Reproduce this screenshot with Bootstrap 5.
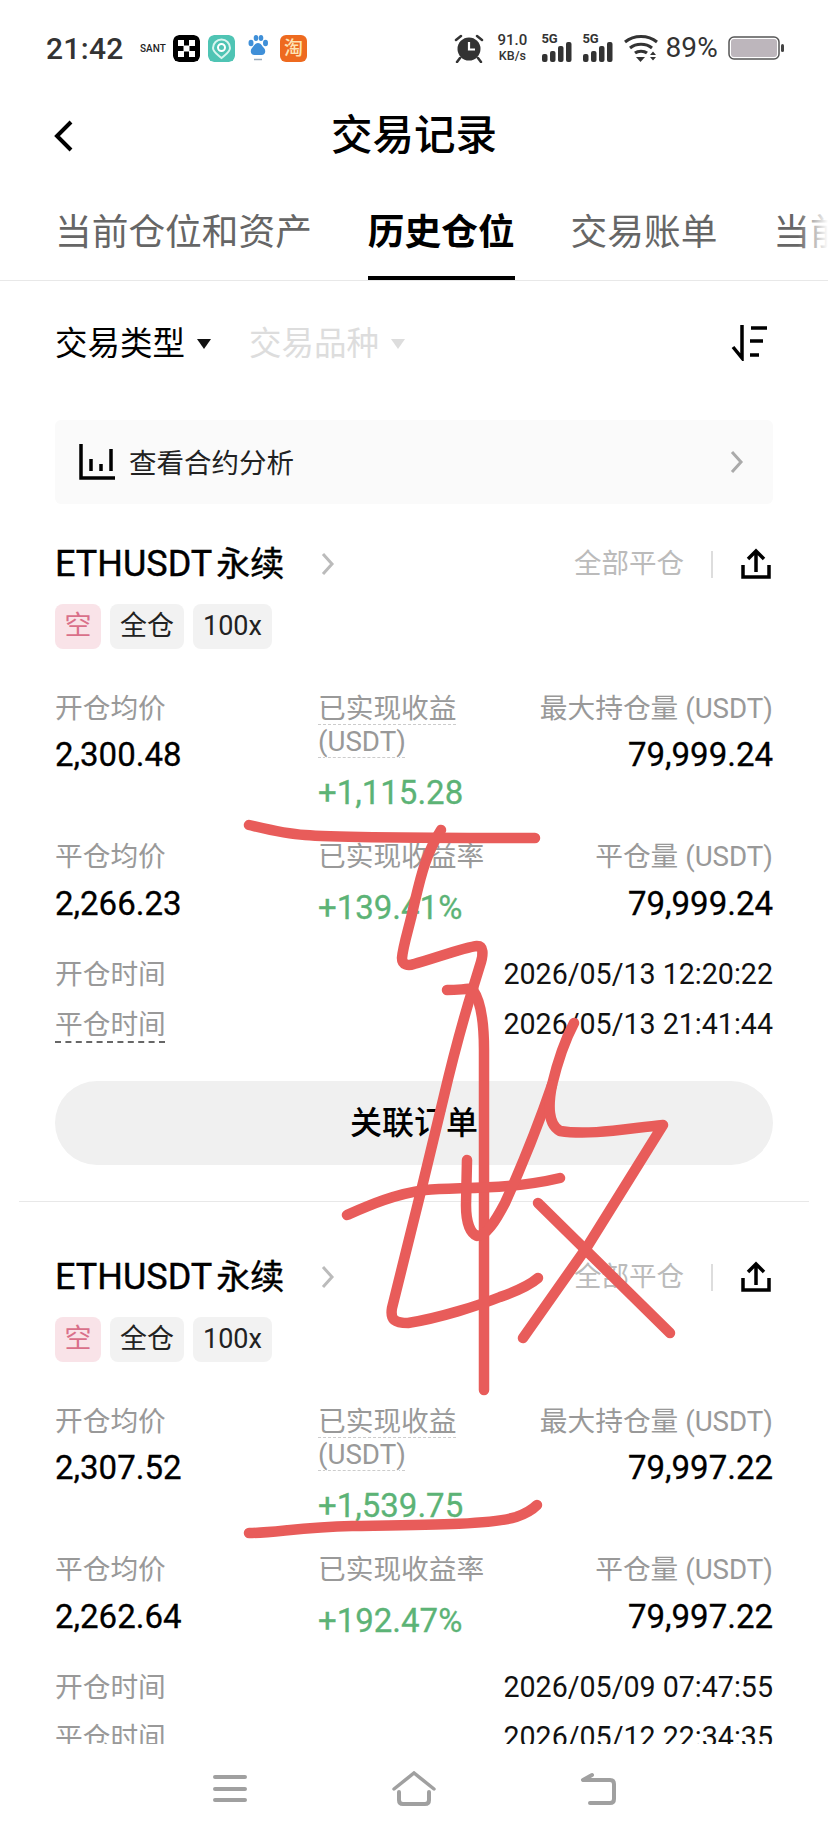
<!DOCTYPE html>
<html lang="zh-CN">
<head>
    <meta charset="UTF-8">
    <meta name="viewport" content="width=device-width, initial-scale=1.0">
    <title>交易记录</title>
    <link href="https://cdn.jsdelivr.net/npm/bootstrap@5.3.0/dist/css/bootstrap.min.css" rel="stylesheet">
    <style>
        body { background: #fff; font-family: Roboto, "Noto Sans CJK SC", sans-serif; color: #000; }
        .phone { width: 828px; height: 1840px; overflow: hidden; position: relative; background: #fff; }

        .status-bar { height: 96px; padding: 0 43px 0 46px; }
        .status-time { font-size: 30px; font-weight: 500; color: #333; width: 84px; letter-spacing: .3px; }
        .status-left { gap: 10px; }
        .sant { font-size: 10px; font-weight: 500; width: 23px; text-align: center; color: #222; }
        .app-icon { width: 27px; height: 27px; border-radius: 6px; }
        .app-tao { background: #ee6a1f; color: #fde3b4; font-size: 19px; line-height: 27px; text-align: center; font-weight: 500; }
        .status-right { color: #333; }
        .net-speed { font-size: 15px; font-weight: 500; line-height: 15px; text-align: center; width: 36px; margin-left: 10px; margin-right: 11px; }
        .net-speed small { font-size: 12.5px; display: block; }
        .sim { width: 33px; margin-right: 8px; position: relative; height: 30px; }
        .sim-tag { font-size: 13px; font-weight: 700; line-height: 12px; position: absolute; left: 0; top: 0; }
        .batt-pct { font-size: 28px; color: #333; margin: 0 10px 0 6px; letter-spacing: .2px; }

        .page-head { height: 78px; position: relative; padding-top: 2px; }
        .page-title { font-size: 41.5px; font-weight: 500; line-height: 1; }
        .back-ico { position: absolute; left: 53px; top: 23px; }

        .rec-tabs { height: 107px; padding-left: 55px; gap: 56px; border-bottom: 1px solid #e8e8e8; overflow: hidden; position: relative; flex-wrap: nowrap; }
        .rec-tabs .nav-link { padding: 0; height: 107px; line-height: 118px; font-size: 36.7px; color: #666; white-space: nowrap; flex: none; }
        .rec-tabs .nav-link.active { color: #000; font-weight: 700; position: relative; }
        .rec-tabs .nav-link.active::after { content: ""; position: absolute; left: 0; right: 0; bottom: 0; height: 5px; background: #000; }
        .rec-tabs::after { content: ""; position: absolute; right: 0; top: 0; bottom: 0; width: 30px; background: linear-gradient(to right, rgba(255,255,255,0), #fff); }

        .wrap-side { padding: 0 55px; }
        .filters { height: 122px; }
        .filter-item { font-size: 32.5px; padding-top: 4px; }
        .filter-off { color: #ddd; margin-left: 38px; }
        .caret-ico { width: 0; height: 0; border-left: 7px solid transparent; border-right: 7px solid transparent; border-top: 10px solid #111; margin-left: 12px; margin-top: 0; }
        .filter-off .caret-ico { border-top-color: #ddd; }

        .analysis { height: 84px; margin-top: 17px; background: #fafafa; border-radius: 6px; padding: 0 28px 0 24px; font-size: 27.5px; color: #222; }
        .analysis svg:first-child { margin-right: 14px; }
        .analysis span { padding-top: 3px; }

        .scroll-area { height: 1040px; overflow: hidden; }
        .trade-head { height: 50px; margin-top: 35px; }
        .trade-name { font-size: 34px; font-weight: 400; line-height: 1; display: flex; align-items: center; gap: 4px; -webkit-text-stroke: .4px #000; }
        .trade-sym { font-size: 36px; }
        .close-all { font-size: 27.5px; color: #bbb; }
        .head-sep { width: 2px; height: 27px; background: #ddd; margin: 0 27px 0 27px; }
        .tag-row { margin-top: 15px; gap: 9px; }
        .tag-item { height: 45px; line-height: 45px; padding: 0 10px; border-radius: 8px; background: #f2f2f2; font-size: 27px; color: #222; }
        .tag-short { background: #f9e3e8; color: #d9708a; padding: 0 9.5px; }

        .stat-row { font-size: 27.7px; }
        .stat-a { margin-top: 43px; }
        .stat-b { margin-top: 24px; }
        .col-open { width: 263px; flex: none; }
        .col-pnl { width: 190px; flex: none; }
        .col-size { flex: 1; text-align: right; }
        .stat-label { line-height: 33px; color: #999; white-space: nowrap; }
        .stat-num { font-size: 33px; line-height: 46px; margin-top: 7px; white-space: nowrap; -webkit-text-stroke: .3px #000; }
        .stat-b .stat-num { margin-top: 8px; }
        .stat-b .stat-gain { margin-top: 12px; }
        .stat-gain { color: #5cb376; -webkit-text-stroke: .3px #5cb376; }
        .gain-top { margin-top: 12px; }
        .dash-line { text-decoration: underline dashed #ccc 1px; text-underline-offset: 6px; }
        .dash-dark { text-decoration: underline dashed #666 1.5px; text-underline-offset: 7px; }
        .time-row { font-size: 27.7px; line-height: 33px; }
        .time-row span:first-child { color: #999; }
        .time-val { font-size: 28.6px; color: #111; }
        .time-1 { margin-top: 27px; }
        .time-2 { margin-top: 17px; }

        .btn-linked { display: block; width: 100%; height: 84px; margin-top: 40px; background: #f0f0f0; border: 0; border-radius: 42px; font-size: 32px; font-weight: 500; color: #000; }
        .card-split { margin: 36px 19px 50px; height: 1px; background: #e8e8e8; }

        .bottom-nav { height: 96px; padding-bottom: 6px; }
        .bottom-nav > div { width: 184px; }

        .scribble { position: absolute; left: 0; top: 0; pointer-events: none; }
        .scribble path { fill: none; stroke: #e85c5a; stroke-width: 10.5; stroke-linecap: round; stroke-linejoin: round; }
    </style>
</head>
<body>
<div class="phone d-flex flex-column">

    <div class="status-bar d-flex align-items-center justify-content-between">
        <div class="status-left d-flex align-items-center">
            <div class="status-time">21:42</div>
            <div class="sant">SANT</div>
            <svg class="app-icon" viewBox="0 0 27 27">
                <rect width="27" height="27" rx="6" fill="#000"/>
                <rect x="5" y="5" width="6" height="6" fill="#fff"/><rect x="16" y="5" width="6" height="6" fill="#fff"/>
                <rect x="10.5" y="10.5" width="6" height="6" fill="#fff"/>
                <rect x="5" y="16" width="6" height="6" fill="#fff"/><rect x="16" y="16" width="6" height="6" fill="#fff"/>
            </svg>
            <svg class="app-icon" viewBox="0 0 27 27" style="margin-left:-2px">
                <rect width="27" height="27" rx="6" fill="#4fc4b4"/>
                <path d="M5 13a8.5 8.5 0 0 1 17 0c0 4-4 6-8.5 10C9 19 5 17 5 13z" fill="none" stroke="#d8f5ef" stroke-width="2"/>
                <circle cx="13.5" cy="12.5" r="3.5" fill="none" stroke="#fff" stroke-width="2"/>
            </svg>
            <svg width="22" height="30" viewBox="0 0 22 30" style="margin-left:2px">
                <g fill="#3f8fd8"><ellipse cx="4" cy="10" rx="2.5" ry="3.2"/><ellipse cx="9" cy="5" rx="2.3" ry="3"/><ellipse cx="14" cy="5" rx="2.3" ry="3"/><ellipse cx="18.5" cy="10" rx="2.5" ry="3.2"/><path d="M11 10c-3 0-4 3-6 5-2.5 3-1 7 2.5 7h7c3.5 0 5-4 2.5-7-2-2-3-5-6-5z"/></g>
                <path d="M7 26.5h8" stroke="#9ab" stroke-width="1.5"/>
            </svg>
            <div class="app-icon app-tao" style="margin-left:1px">淘</div>
        </div>
        <div class="status-right d-flex align-items-center">
            <svg width="30" height="30" viewBox="0 0 30 30">
                <circle cx="15" cy="16" r="11.5" fill="#333"/>
                <path d="M15 9v7.5h6" fill="none" stroke="#fff" stroke-width="2.2"/>
                <path d="M2 7l5-4M28 7l-5-4M6 25l-3 4M24 25l3 4" stroke="#333" stroke-width="2.5" stroke-linecap="round"/>
            </svg>
            <div class="net-speed">91.0<small>KB/s</small></div>
            <div class="sim">
                <span class="sim-tag">5G</span>
                <svg width="33" height="30" viewBox="0 0 33 30"><g fill="#333"><rect x="1" y="21" width="5.5" height="8" rx="2"/><rect x="9" y="18" width="5.5" height="11" rx="2"/><rect x="17" y="13" width="5.5" height="16" rx="2"/><rect x="25" y="9" width="5.5" height="20" rx="2"/></g></svg>
            </div>
            <div class="sim">
                <span class="sim-tag">5G</span>
                <svg width="33" height="30" viewBox="0 0 33 30"><g fill="#333"><rect x="1" y="21" width="5.5" height="8" rx="2"/><rect x="9" y="18" width="5.5" height="11" rx="2"/><rect x="17" y="13" width="5.5" height="16" rx="2"/><rect x="25" y="9" width="5.5" height="20" rx="2"/></g></svg>
            </div>
            <svg width="36" height="30" viewBox="0 0 36 30">
                <path d="M2 9c9-7.5 23-7.5 32 0M7 15c6-5 16-5 22 0M12 20c3-2.5 9-2.5 12 0" fill="none" stroke="#333" stroke-width="3"/>
                <path d="M13 24h9l-4.5 5z" fill="#333"/>
                <path d="M27 22l3-3.5 3 3.5zM27 24h6l-3 3.5z" fill="#333"/>
            </svg>
            <div class="batt-pct">89%</div>
            <svg width="57" height="24" viewBox="0 0 57 24">
                <rect x="1" y="1" width="50" height="22" rx="5" fill="#fff" stroke="#555" stroke-width="1.5"/>
                <rect x="3" y="3" width="46" height="18" rx="3" fill="#bdb6bc"/>
                <rect x="53" y="8" width="3" height="8" rx="1.5" fill="#444"/>
            </svg>
        </div>
    </div>

    <div class="page-head d-flex align-items-center justify-content-center">
        <svg class="back-ico" width="24" height="34" viewBox="0 0 24 34"><path d="M18 3L4 17l14 14" fill="none" stroke="#000" stroke-width="4"/></svg>
        <div class="page-title">交易记录</div>
    </div>

    <div class="nav rec-tabs">
        <a class="nav-link" href="#">当前仓位和资产</a>
        <a class="nav-link active" href="#">历史仓位</a>
        <a class="nav-link" href="#">交易账单</a>
        <a class="nav-link" href="#">当前委托</a>
    </div>

    <div class="scroll-area flex-grow-1">
        <div class="wrap-side">
            <div class="filters d-flex align-items-center">
                <div class="filter-item d-flex align-items-center">交易类型<span class="caret-ico"></span></div>
                <div class="filter-item filter-off d-flex align-items-center">交易品种<span class="caret-ico"></span></div>
                <svg class="ms-auto" width="38" height="38" viewBox="0 0 38 38" style="margin-right:5px">
                    <path d="M12 2v33L3 24" fill="none" stroke="#000" stroke-width="3.5"/>
                    <path d="M21 5h16M20 18h13M20 32h9" fill="none" stroke="#000" stroke-width="3.5"/>
                </svg>
            </div>

            <div class="analysis d-flex align-items-center">
                <svg width="36" height="36" viewBox="0 0 36 36">
                    <path d="M2 0v34h34" fill="none" stroke="#000" stroke-width="3.5"/>
                    <path d="M12 15v12M22 20v7M32 5v22" fill="none" stroke="#000" stroke-width="3.5"/>
                </svg>
                <span>查看合约分析</span>
                <svg class="ms-auto" width="16" height="26" viewBox="0 0 16 26"><path d="M3 3l9 10-9 10" fill="none" stroke="#aaa" stroke-width="3"/></svg>
            </div>

            <!-- 第一笔 -->
            <div class="trade-head d-flex align-items-center">
                <div class="trade-name"><span class="trade-sym">ETHUSDT</span><span>永续</span></div>
                <svg width="16" height="26" viewBox="0 0 16 26" style="margin-left:36px"><path d="M3 3l9 10-9 10" fill="none" stroke="#bbb" stroke-width="3"/></svg>
                <div class="close-all ms-auto">全部平仓</div>
                <div class="head-sep"></div>
                <svg width="32" height="32" viewBox="0 0 32 32" style="margin-right:1px"><path d="M3 17v12h26V17" fill="none" stroke="#000" stroke-width="3.5"/><path d="M16 24V4M8 11l8-8 8 8" fill="none" stroke="#000" stroke-width="3.5"/></svg>
            </div>
            <div class="tag-row d-flex">
                <div class="tag-item tag-short">空</div>
                <div class="tag-item">全仓</div>
                <div class="tag-item">100x</div>
            </div>
            <div class="stat-row stat-a d-flex">
                <div class="col-open"><div class="stat-label">开仓均价</div><div class="stat-num">2,300.48</div></div>
                <div class="col-pnl">
                    <div class="stat-label"><span class="dash-line">已实现收益</span><br><span class="dash-line">(USDT)</span></div>
                    <div class="stat-num stat-gain gain-top">+1,115.28</div>
                </div>
                <div class="col-size"><div class="stat-label">最大持仓量 (USDT)</div><div class="stat-num">79,999.24</div></div>
            </div>
            <div class="stat-row stat-b d-flex">
                <div class="col-open"><div class="stat-label">平仓均价</div><div class="stat-num">2,266.23</div></div>
                <div class="col-pnl"><div class="stat-label">已实现收益率</div><div class="stat-num stat-gain">+139.41%</div></div>
                <div class="col-size"><div class="stat-label">平仓量 (USDT)</div><div class="stat-num">79,999.24</div></div>
            </div>
            <div class="time-row time-1 d-flex justify-content-between"><span>开仓时间</span><span class="time-val">2026/05/13 12:20:22</span></div>
            <div class="time-row time-2 d-flex justify-content-between"><span class="dash-dark">平仓时间</span><span class="time-val">2026/05/13 21:41:44</span></div>
            <button class="btn btn-linked" type="button">关联订单</button>
        </div>

        <div class="card-split"></div>

        <div class="wrap-side">
            <!-- 第二笔 -->
            <div class="trade-head d-flex align-items-center" style="margin-top:0">
                <div class="trade-name"><span class="trade-sym">ETHUSDT</span><span>永续</span></div>
                <svg width="16" height="26" viewBox="0 0 16 26" style="margin-left:36px"><path d="M3 3l9 10-9 10" fill="none" stroke="#bbb" stroke-width="3"/></svg>
                <div class="close-all ms-auto">全部平仓</div>
                <div class="head-sep"></div>
                <svg width="32" height="32" viewBox="0 0 32 32" style="margin-right:1px"><path d="M3 17v12h26V17" fill="none" stroke="#000" stroke-width="3.5"/><path d="M16 24V4M8 11l8-8 8 8" fill="none" stroke="#000" stroke-width="3.5"/></svg>
            </div>
            <div class="tag-row d-flex">
                <div class="tag-item tag-short">空</div>
                <div class="tag-item">全仓</div>
                <div class="tag-item">100x</div>
            </div>
            <div class="stat-row stat-a d-flex">
                <div class="col-open"><div class="stat-label">开仓均价</div><div class="stat-num">2,307.52</div></div>
                <div class="col-pnl">
                    <div class="stat-label"><span class="dash-line">已实现收益</span><br><span class="dash-line">(USDT)</span></div>
                    <div class="stat-num stat-gain gain-top">+1,539.75</div>
                </div>
                <div class="col-size"><div class="stat-label">最大持仓量 (USDT)</div><div class="stat-num">79,997.22</div></div>
            </div>
            <div class="stat-row stat-b d-flex">
                <div class="col-open"><div class="stat-label">平仓均价</div><div class="stat-num">2,262.64</div></div>
                <div class="col-pnl"><div class="stat-label">已实现收益率</div><div class="stat-num stat-gain">+192.47%</div></div>
                <div class="col-size"><div class="stat-label">平仓量 (USDT)</div><div class="stat-num">79,997.22</div></div>
            </div>
            <div class="time-row time-1 d-flex justify-content-between"><span>开仓时间</span><span class="time-val">2026/05/09 07:47:55</span></div>
            <div class="time-row time-2 d-flex justify-content-between"><span>平仓时间</span><span class="time-val">2026/05/12 22:34:35</span></div>
        </div>
    </div>

    <div class="bottom-nav d-flex justify-content-center align-items-center flex-shrink-0">
        <div class="d-flex justify-content-center">
            <svg width="40" height="32" viewBox="0 0 40 32"><path d="M5 4h30M5 16h30M5 27h30" stroke="#a0a0a0" stroke-width="4" stroke-linecap="round"/></svg>
        </div>
        <div class="d-flex justify-content-center">
            <svg width="46" height="36" viewBox="0 0 46 36"><path d="M3 18L23 2l20 16" fill="none" stroke="#a0a0a0" stroke-width="3.5" stroke-linecap="round"/><path d="M8 21v8q0 4 4 4h22q4 0 4-4v-8" fill="none" stroke="#a0a0a0" stroke-width="4" stroke-linecap="round"/></svg>
        </div>
        <div class="d-flex justify-content-center">
            <svg width="40" height="34" viewBox="0 0 40 34" style="margin-left:3px"><path d="M3 8l9-5M4 8h26q4 0 4 4v15q0 4-4 4H10" fill="none" stroke="#a0a0a0" stroke-width="4" stroke-linecap="round"/></svg>
        </div>
    </div>

    <!-- 手写涂改 -->
    <svg class="scribble" width="828" height="1840" viewBox="0 0 828 1840">
        <path d="M249 825C270 830 285 834 305 835C340 838 440 838 535 838"/>
        <path d="M441 830C425 855 420 880 414 905C410 925 403 945 402 958C402 965 408 966 414 964C430 960 465 947 477 946C484 946 483 955 481 962L473 988C470 989 455 990 447 990"/>
        <path d="M473 988C460 1030 450 1070 443 1100L422 1187L392 1308C390 1320 395 1323 408 1323C440 1318 480 1305 500 1297C520 1290 530 1285 538 1278"/>
        <path d="M473 990C480 1000 484 1020 484 1050L484 1390"/>
        <path d="M347 1215C370 1205 395 1194 425 1190C460 1187 510 1190 560 1178"/>
        <path d="M467 1160L466 1205C466 1222 470 1233 477 1236C486 1236 495 1222 505 1203C520 1170 540 1120 552 1085C558 1060 565 1040 574 1023"/>
        <path d="M552 1085C548 1105 548 1125 560 1131C590 1136 630 1128 663 1125L587 1247L523 1338"/>
        <path d="M538 1203L670 1333"/>
        <path d="M249 1533C275 1533 300 1527 352 1526C420 1525 490 1525 516 1517C525 1514 532 1510 537 1505"/>
    </svg>
</div>

<script src="https://cdn.jsdelivr.net/npm/bootstrap@5.3.0/dist/js/bootstrap.bundle.min.js"></script>
</body>
</html>
